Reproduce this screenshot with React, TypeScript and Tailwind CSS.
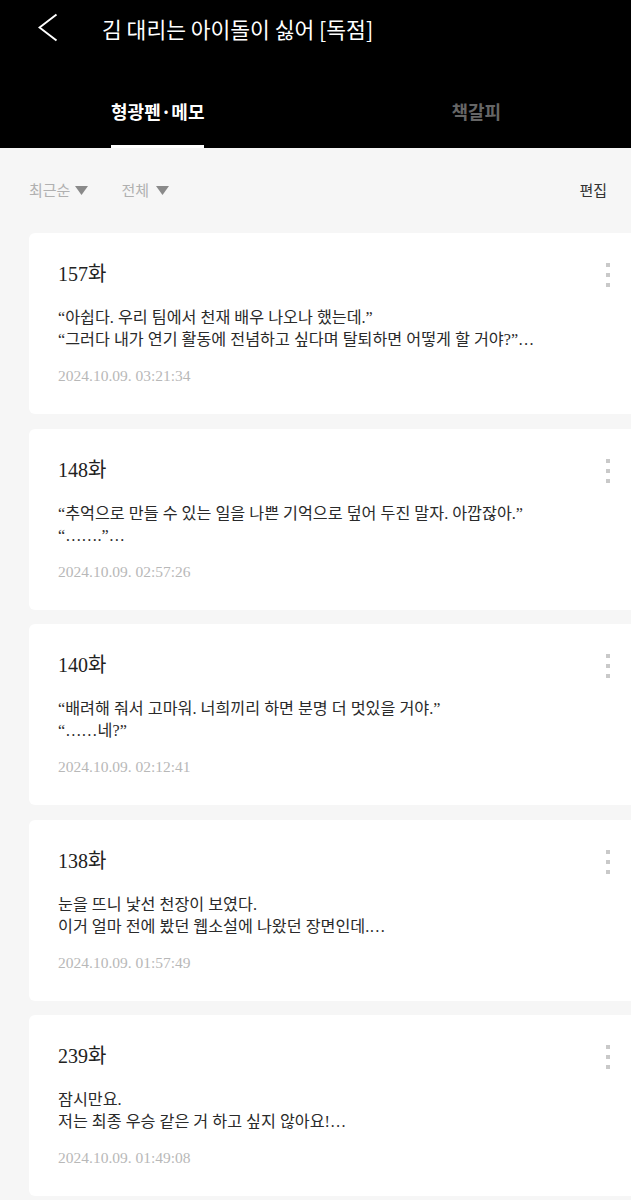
import React from 'react';

interface Memo {
  id: number;
  episode: string;
  lines: string[];
  savedAt: string;
}

const memos: Memo[] = [
  {
    id: 1,
    episode: '157화',
    lines: ['“아쉽다. 우리 팀에서 천재 배우 나오나 했는데.”', '“그러다 내가 연기 활동에 전념하고 싶다며 탈퇴하면 어떻게 할 거야?”…'],
    savedAt: '2024.10.09. 03:21:34',
  },
  {
    id: 2,
    episode: '148화',
    lines: ['“추억으로 만들 수 있는 일을 나쁜 기억으로 덮어 두진 말자. 아깝잖아.”', '“…….”…'],
    savedAt: '2024.10.09. 02:57:26',
  },
  {
    id: 3,
    episode: '140화',
    lines: ['“배려해 줘서 고마워. 너희끼리 하면 분명 더 멋있을 거야.”', '“……네?”'],
    savedAt: '2024.10.09. 02:12:41',
  },
  {
    id: 4,
    episode: '138화',
    lines: ['눈을 뜨니 낯선 천장이 보였다.', '이거 얼마 전에 봤던 웹소설에 나왔던 장면인데.…'],
    savedAt: '2024.10.09. 01:57:49',
  },
  {
    id: 5,
    episode: '239화',
    lines: ['잠시만요.', '저는 최종 우승 같은 거 하고 싶지 않아요!…'],
    savedAt: '2024.10.09. 01:49:08',
  },
];

const sans = "font-['Noto_Sans_CJK_KR','Noto_Sans',sans-serif]";
const serif = "font-['Liberation_Serif','Noto_Sans_CJK_KR',serif]";

function Caret() {
  return (
    <svg width="13" height="9" viewBox="0 0 13 9" className="ml-[5px]">
      <path d="M0 0 H13 L6.5 9 Z" fill="#8a8a8a" />
    </svg>
  );
}

function MemoCard({ memo }: { memo: Memo }) {
  return (
    <div className="relative h-[181px] w-[640px] rounded-[6px] bg-white pl-[29px] pt-[27px]">
      <div className={`${serif} text-[20px] leading-[28px] text-[#222]`}>{memo.episode}</div>
      <div className={`${serif} mt-[19px] text-[16.2px] leading-[22px] text-[#2a2a2a]`}>
        {memo.lines.map((line, i) => (
          <div key={i} className="whitespace-nowrap">{line}</div>
        ))}
      </div>
      <div className={`${serif} mt-[15px] text-[15.5px] leading-[20px] text-[#b8b8b8]`}>{memo.savedAt}</div>
      {/* kebab */}
      <div className="absolute left-[577px] top-[30px] flex flex-col gap-[6px]">
        <span className="block h-[4px] w-[4px] bg-[#c9c9c9]" />
        <span className="block h-[4px] w-[4px] bg-[#c9c9c9]" />
        <span className="block h-[4px] w-[4px] bg-[#c9c9c9]" />
      </div>
    </div>
  );
}

export default function App() {
  return (
    <div className={`${sans} min-h-[1200px] w-[631px] overflow-hidden bg-[#f6f6f6]`}>
      {/* Header */}
      <div className="bg-black">
        <div className="flex h-[62px] items-center">
          <svg width="20" height="30" viewBox="0 0 20 30" className="ml-[38px] mt-[-6px]">
            <path d="M18.5 1.5 L1.5 14.5 L18.5 27.5" fill="none" stroke="#fff" strokeWidth="2" />
          </svg>
          <span className="ml-[44px] mt-[-4px] text-[21.5px] leading-[28px] text-white">김 대리는 아이돌이 싫어 [독점]</span>
        </div>
        <div className="grid h-[86px] grid-cols-2">
          <div className="flex justify-center">
            <div className="inline-flex h-full flex-col pt-[37px]">
              <span className="text-[18px] font-bold leading-[24px] text-white">형광펜·메모</span>
              <span className="mt-auto block h-[3px] bg-white" />
            </div>
          </div>
          <div className="flex justify-center">
            <div className="inline-flex h-full flex-col pt-[37px]">
              <span className="ml-[6px] text-[18px] font-bold leading-[24px] text-[#666]">책갈피</span>
            </div>
          </div>
        </div>
      </div>

      {/* Filters */}
      <div className="flex h-[85px] items-center px-[29px] pr-[24px]">
        <button className="flex items-center text-[15px] text-[#b0b0b0]">
          최근순
          <Caret />
        </button>
        <button className="ml-[33px] flex items-center text-[15px] text-[#b0b0b0]">
          전체
          <span className="ml-[2px] inline-flex"><Caret /></span>
        </button>
        <button className="ml-auto text-[15px] text-[#333]">편집</button>
      </div>

      {/* Memo list */}
      <div className="flex flex-col gap-[14.5px] pl-[29px]">
        {memos.map((m) => (
          <MemoCard key={m.id} memo={m} />
        ))}
      </div>
    </div>
  );
}
